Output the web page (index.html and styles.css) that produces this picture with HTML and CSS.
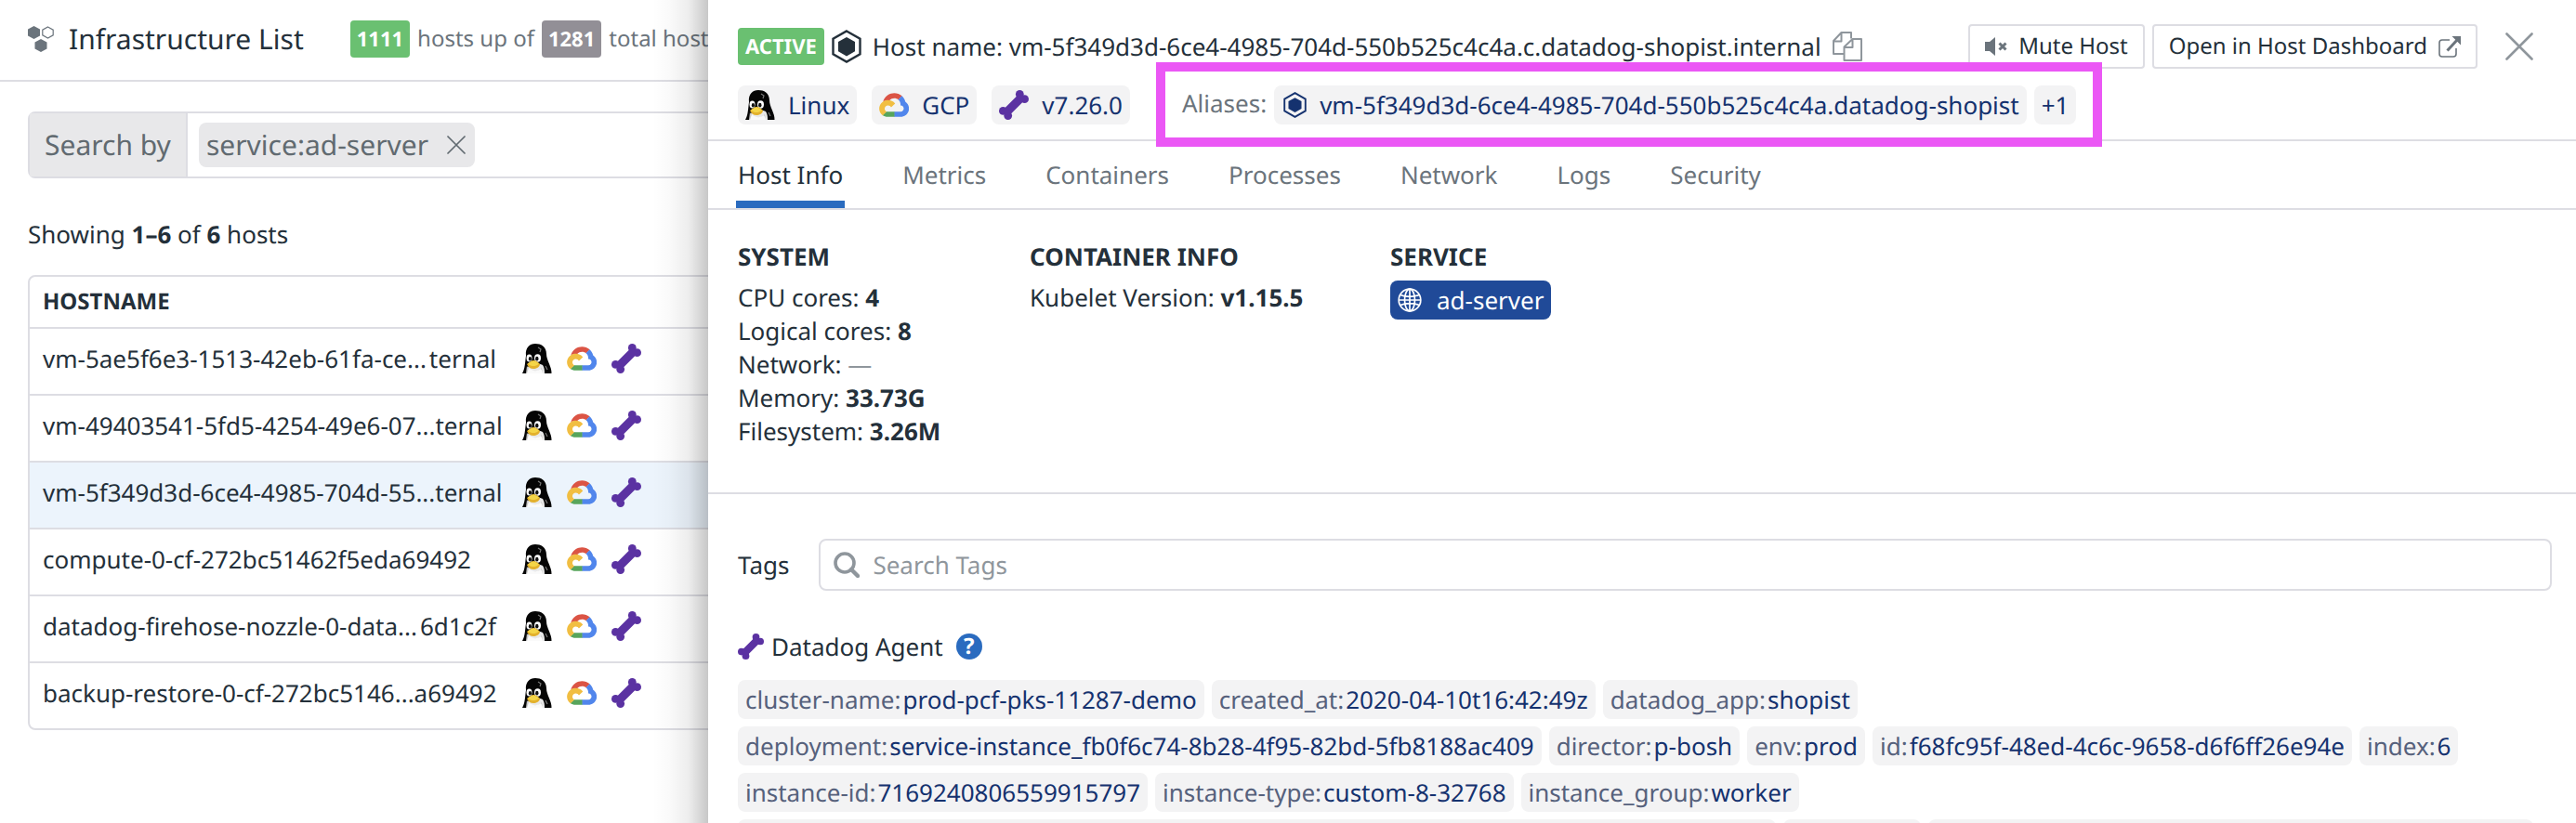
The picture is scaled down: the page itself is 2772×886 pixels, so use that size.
FILE: index.html
```html
<!DOCTYPE html>
<html lang="en">
<head>
<meta charset="utf-8">
<title>Infrastructure List</title>
<link rel="stylesheet" href="styles.css">
</head>
<body>
<svg class="sprite" aria-hidden="true">
  <symbol id="tux" viewBox="0 0 32 32">
    <path d="M4 13C3 4 8 0 14 0s12 3 12 11c0 7 6 14 5.500 21H0c3-5 3-12 4-19z" fill="#050505"/>
    <path d="M7 24c2-3 10-3 15-1 2 3 2 6 2 9H5c0-3 0-6 2-8z" fill="#e9e9e9"/>
    <path d="M5 24c3 6 10 8 16 2l1 6H4z" fill="#c9c9c9"/>
    <path d="M7 26l-2 6h17c0-2-1-3-2-5-4 3-9 3-13-1z" fill="#fafafa"/>
    <ellipse cx="7.500" cy="15.500" rx="3" ry="4" fill="#fff"/>
    <ellipse cx="16.500" cy="15.500" rx="3.500" ry="4.200" fill="#fff"/>
    <ellipse cx="8.400" cy="16.200" rx="1.600" ry="2.300" fill="#111"/>
    <ellipse cx="15.800" cy="16.200" rx="1.700" ry="2.400" fill="#111"/>
    <path d="M5 22c2-1 4-4 7-4 3 0 5 2 7 4 0 3-4 5-7 5s-6-2-7-5z" fill="#e3b12c"/>
    <path d="M6 21.500c2-1 4-3 6-3s4 2 6 3c-2 2-4 2.500-6 2.500s-4-.5-6-2.500z" fill="#f4d548"/>
    <path d="M17 4l3 2-1 3M25 24l2 4" fill="none" stroke="#777" stroke-width="1.200"/>
  </symbol>
  <symbol id="gcp" viewBox="5 14 117 94">
    <path fill="#db5445" d="M80.600 40.300h.4l-.2-.2 14-14v-.3c-11.800-10.400-28.100-14-43.200-9.500C36.500 20.800 24.900 32.800 20.700 48c.2-.1.5-.2.8-.2 5.200-3.400 11.400-5.400 17.900-5.400 2.200 0 4.300.2 6.400.6.1-.1.2-.1.3-.1 9-9.900 24.200-11.100 34.600-2.600h-.1z"/>
    <path fill="#5186ec" d="M108.100 47.800c-2.300-8.500-7.100-16.200-13.800-22.100L80 39.900c6 4.900 9.500 12.300 9.300 20v2.500c16.900 0 16.900 25.200 0 25.200H63.900v20.200h25.400c14.600.1 27.500-9.300 31.800-23.100 4.300-13.800-1-28.800-13-36.900z"/>
    <path fill="#58a55c" d="M39 107.900h26.300V87.700H39c-1.900 0-3.700-.4-5.400-1.100l-15.200 14.600v.2c6 4.300 13.200 6.600 20.700 6.500z"/>
    <path fill="#f1be42" d="M40.200 41.900c-14.900.1-28.100 9.300-32.900 22.800-4.800 13.600 0 28.500 11.800 37.300l15.600-14.900c-8.600-3.700-10.600-14.500-4-20.800 6.600-6.400 17.800-4.400 21.700 3.800L68 55.200C61.400 46.900 51.100 42 40.200 41.900z"/>
  </symbol>
  <symbol id="bone" viewBox="0 0 32 32">
    <g fill="#5b32a2"><circle cx="22.300" cy="4.400" r="4.400"/><circle cx="27.600" cy="9.700" r="4.400"/><circle cx="4.400" cy="22.400" r="4.400"/><circle cx="9.700" cy="27.600" r="4.400"/></g>
    <path d="M7 25L25 7" stroke="#5b32a2" stroke-width="9"/>
  </symbol>
  <symbol id="hex" viewBox="0 0 32 36">
    <path d="M16 1.500L30.500 9.800v16.400L16 34.500 1.500 26.200V9.800z" fill="none" stroke="currentColor" stroke-width="2.400"/>
    <path d="M16 8l9 5v10.200L16 28.400 7 23.200V13z" fill="currentColor"/>
  </symbol>
  <symbol id="cross" viewBox="0 0 30 30">
    <path d="M1.500 1.500l27 27M28.500 1.500l-27 27" fill="none" stroke="currentColor" stroke-width="2.600" stroke-linecap="round"/>
  </symbol>
</svg>

<main class="page">
  <header class="page-header">
    <svg class="brand-icon" viewBox="0 0 28 28" aria-hidden="true">
      <path d="M6.500 0L13 3.500v7L6.500 14 0 10.500v-7zM14 14l6.500 3.500v7L14 28l-6.500-3.500v-7z" fill="#6b747c"/>
      <path d="M21.500 1l5.700 3.100v5.800L21.500 13l-5.700-3.100V4.100z" fill="none" stroke="#6b747c" stroke-width="1.200"/>
    </svg>
    <h1 class="title">Infrastructure List</h1>
    <p class="stats"><span class="badge badge-up">1111</span><span>hosts up of</span><span class="badge badge-total">1281</span><span>total hosts</span></p>
  </header>

  <div class="page-body">
    <div class="filter">
      <label class="filter-label" for="filter">Search by</label>
      <div class="filter-field">
        <span class="filter-chip">service:ad-server<button class="icon-button" type="button" aria-label="Remove filter"><svg class="chip-cross"><use href="#cross"/></svg></button></span>
        <input class="filter-input" id="filter" type="text">
      </div>
    </div>
    <p class="showing">Showing <b>1–6</b> of <b>6</b> hosts</p>

    <div class="table-frame">
      <table class="hosts">
        <thead><tr><th scope="col">HOSTNAME</th></tr></thead>
        <tbody>
          <tr><td><div class="host"><span class="host-name"><span>vm-5ae5f6e3-1513-42eb-61fa-ce...</span><span>ternal</span></span><span class="apps"><svg class="i32"><use href="#tux"/></svg><svg class="i32"><use href="#gcp"/></svg><svg class="i32"><use href="#bone"/></svg></span></div></td></tr>
          <tr><td><div class="host"><span class="host-name"><span>vm-49403541-5fd5-4254-49e6-07...</span><span>ternal</span></span><span class="apps"><svg class="i32"><use href="#tux"/></svg><svg class="i32"><use href="#gcp"/></svg><svg class="i32"><use href="#bone"/></svg></span></div></td></tr>
          <tr class="selected"><td><div class="host"><span class="host-name"><span>vm-5f349d3d-6ce4-4985-704d-55...</span><span>ternal</span></span><span class="apps"><svg class="i32"><use href="#tux"/></svg><svg class="i32"><use href="#gcp"/></svg><svg class="i32"><use href="#bone"/></svg></span></div></td></tr>
          <tr><td><div class="host"><span class="host-name"><span>compute-0-cf-272bc51462f5eda69492</span></span><span class="apps"><svg class="i32"><use href="#tux"/></svg><svg class="i32"><use href="#gcp"/></svg><svg class="i32"><use href="#bone"/></svg></span></div></td></tr>
          <tr><td><div class="host"><span class="host-name"><span>datadog-firehose-nozzle-0-data...</span><span>6d1c2f</span></span><span class="apps"><svg class="i32"><use href="#tux"/></svg><svg class="i32"><use href="#gcp"/></svg><svg class="i32"><use href="#bone"/></svg></span></div></td></tr>
          <tr><td><div class="host"><span class="host-name"><span>backup-restore-0-cf-272bc5146...</span><span>a69492</span></span><span class="apps"><svg class="i32"><use href="#tux"/></svg><svg class="i32"><use href="#gcp"/></svg><svg class="i32"><use href="#bone"/></svg></span></div></td></tr>
        </tbody>
      </table>
    </div>
  </div>
</main>

<aside class="drawer">
  <header class="drawer-header">
    <div class="host-row">
      <span class="badge badge-up badge-active">ACTIVE</span>
      <svg class="host-hex"><use href="#hex"/></svg>
      <h2 class="host-title">Host name: vm-5f349d3d-6ce4-4985-704d-550b525c4c4a.c.datadog-shopist.internal</h2>
      <button class="icon-button" type="button" aria-label="Copy host name">
        <svg class="i32" viewBox="0 0 32 32" fill="none" stroke="#8f969c" stroke-width="2" stroke-linejoin="round"><path d="M12 24H1V10l8.500-9H20v6.500M1 10.500h8.500V1"/><path d="M12.500 31V16.500L21.500 8H31v23zM12.500 17h9V8"/></svg>
      </button>
      <div class="actions">
        <button class="button" type="button">
          <svg class="i24" viewBox="0 0 24 24" aria-hidden="true"><path d="M0 7h5l6-5v20l-6-5H0z" fill="#6b747c"/><path d="M15.500 8.500l7 7M22.500 8.500l-7 7" stroke="#6b747c" stroke-width="3"/></svg>
          Mute Host
        </button>
        <button class="button" type="button">
          Open in Host Dashboard
          <svg class="i24" viewBox="0 0 24 24" aria-hidden="true" fill="none" stroke="#6b747c"><path d="M12 5H4a3 3 0 0 0-3 3v12a3 3 0 0 0 3 3h12a3 3 0 0 0 3-3v-6" stroke-width="1.600"/><path d="M9.500 16.500L21 4" stroke-width="3"/><path d="M14.500 1H24v9.500z" fill="#6b747c" stroke="none"/></svg>
        </button>
        <button class="icon-button close" type="button" aria-label="Close"><svg class="close-cross"><use href="#cross"/></svg></button>
      </div>
    </div>
    <div class="meta-row">
      <span class="chip app-chip"><svg class="i32"><use href="#tux"/></svg>Linux</span>
      <span class="chip app-chip"><svg class="i32"><use href="#gcp"/></svg>GCP</span>
      <span class="chip app-chip"><svg class="i32"><use href="#bone"/></svg>v7.26.0</span>
      <div class="aliases">
        <span class="aliases-label">Aliases:</span>
        <span class="chip alias-chip"><svg class="alias-hex"><use href="#hex"/></svg>vm-5f349d3d-6ce4-4985-704d-550b525c4c4a.datadog-shopist</span>
        <button class="chip more" type="button">+1</button>
      </div>
    </div>
  </header>

  <nav class="tabs">
    <a class="tab tab-current" href="#info">Host Info</a>
    <a class="tab" href="#metrics">Metrics</a>
    <a class="tab" href="#containers">Containers</a>
    <a class="tab" href="#processes">Processes</a>
    <a class="tab" href="#network">Network</a>
    <a class="tab" href="#logs">Logs</a>
    <a class="tab" href="#security">Security</a>
  </nav>

  <section class="info">
    <div>
      <h3 class="info-title">SYSTEM</h3>
      <ul class="facts">
        <li>CPU cores: <b>4</b></li>
        <li>Logical cores: <b>8</b></li>
        <li>Network: <span class="none">—</span></li>
        <li>Memory: <b>33.73G</b></li>
        <li>Filesystem: <b>3.26M</b></li>
      </ul>
    </div>
    <div>
      <h3 class="info-title">CONTAINER INFO</h3>
      <ul class="facts"><li>Kubelet Version: <b>v1.15.5</b></li></ul>
    </div>
    <div>
      <h3 class="info-title">SERVICE</h3>
      <a class="service" href="#ad-server"><svg class="i26" viewBox="0 0 26 26" fill="none" stroke="#fff" stroke-width="1.700" aria-hidden="true"><circle cx="13" cy="13" r="11.800"/><ellipse cx="13" cy="13" rx="5.500" ry="11.800"/><path d="M13 1v24M1.500 13h23M3 7.500c5 2.500 15 2.500 20 0M3 18.500c5-2.500 15-2.500 20 0"/></svg>ad-server</a>
    </div>
  </section>

  <section class="tags">
    <div class="tag-search">
      <label for="tag-search">Tags</label>
      <div class="tag-field">
        <svg class="i28" viewBox="0 0 28 28" fill="none" stroke="#8f969c" aria-hidden="true"><circle cx="12" cy="12" r="10" stroke-width="3.600"/><path d="M19 19l7 7" stroke-width="4.400" stroke-linecap="round"/></svg>
        <input class="tag-input" id="tag-search" type="text" placeholder="Search Tags">
      </div>
    </div>
    <h3 class="source"><svg class="i28"><use href="#bone"/></svg>Datadog Agent<span class="help">?</span></h3>
    <div class="tag-list">
      <span class="chip"><span class="key">cluster-name:</span>prod-pcf-pks-11287-demo</span>
      <span class="chip"><span class="key">created_at:</span>2020-04-10t16:42:49z</span>
      <span class="chip"><span class="key">datadog_app:</span>shopist</span>
      <span class="chip"><span class="key">deployment:</span>service-instance_fb0f6c74-8b28-4f95-82bd-5fb8188ac409</span>
      <span class="chip"><span class="key">director:</span>p-bosh</span>
      <span class="chip"><span class="key">env:</span>prod</span>
      <span class="chip"><span class="key">id:</span>f68fc95f-48ed-4c6c-9658-d6f6ff26e94e</span>
      <span class="chip"><span class="key">index:</span>6</span>
      <span class="chip"><span class="key">instance-id:</span>7169240806559915797</span>
      <span class="chip"><span class="key">instance-type:</span>custom-8-32768</span>
      <span class="chip"><span class="key">instance_group:</span>worker</span>
      <span class="chip chip-long"></span>
      <span class="chip chip-short"></span>
      <span class="chip chip-medium"></span>
    </div>
  </section>
</aside>
</body>
</html>
```

FILE: styles.css
```css
* { box-sizing: border-box; }

body {
  position: relative;
  height: 100vh;
  margin: 0;
  overflow: hidden;
  background: #fff;
  color: #24303a;
  font: 26px/36px "Noto Sans", sans-serif;
  text-rendering: geometricPrecision;
}

h1, h2, h3, p, ul { margin: 0; padding: 0; font-size: inherit; font-weight: 400; }
ul { list-style: none; }
svg { display: block; flex: none; }
button, input { font: inherit; color: inherit; text-rendering: inherit; }
a { color: inherit; text-decoration: none; }

.sprite { position: absolute; width: 0; height: 0; }
.i24 { width: 24px; height: 24px; }
.i26 { width: 26px; height: 26px; }
.i28 { width: 28px; height: 28px; }
.i32 { width: 32px; height: 32px; }

.icon-button { display: flex; padding: 0; border: 0; background: none; }

/* Host list */
.page-header {
  display: flex;
  align-items: center;
  height: 88px;
  padding: 0 30px 2px;
  border-bottom: 2px solid #dddde3;
  white-space: nowrap;
}
.brand-icon { width: 28px; height: 28px; margin-right: 16px; }
.title { font-size: 30px; }
.stats {
  display: flex;
  align-items: center;
  gap: 8px;
  margin-left: 50px;
  color: #6b747c;
  font-size: 24px;
}
.badge {
  padding: 0 7px;
  border-radius: 4px;
  color: #fff;
  font-size: 22px;
  font-weight: 700;
  line-height: 40px;
}
.badge-up { background: #6ac071; }
.badge-total { background: #928f96; }

.page-body { padding: 32px 30px; }
.filter {
  display: flex;
  height: 72px;
  border: 2px solid #dddde3;
  border-radius: 8px;
  color: #616a70;
  font-size: 30px;
}
.filter-label {
  padding: 0 16px;
  border-right: 2px solid #dddde3;
  background: #e8e8ea;
  line-height: 68px;
  white-space: nowrap;
}
.filter-field { display: flex; flex: 1; align-items: center; padding: 0 12px; }
.filter-chip {
  display: flex;
  align-items: center;
  gap: 20px;
  height: 48px;
  padding: 0 10px 0 8px;
  border-radius: 8px;
  background: #e8e8ea;
}
.chip-cross { width: 20px; height: 20px; }
.filter-input { flex: 1; border: 0; outline: 0; background: none; }
.showing { margin: 42px 0 26px; }

.table-frame { border: 2px solid #dddde3; border-radius: 8px; overflow: hidden; }
.hosts { width: 100%; border-collapse: separate; border-spacing: 0; }
.hosts th {
  height: 54px;
  padding: 0 14px;
  font-size: 24px;
  text-align: left;
}
.hosts td { padding: 14px 14px 20px; border-top: 2px solid #dddde3; }
.selected { background: #ecf4fc; }
.host { display: flex; align-items: center; height: 36px; gap: 28px; }
.host-name { display: flex; justify-content: space-between; width: 488px; white-space: nowrap; }
.apps { display: flex; gap: 16px; }

/* Host details drawer */
.drawer {
  position: absolute;
  inset: 0 0 0 762px;
  overflow: hidden;
  background: #fff;
}
body::after {
  content: "";
  position: absolute;
  top: 0;
  bottom: 0;
  left: 702px;
  width: 60px;
  background: linear-gradient(to right, rgba(0,0,0,0), rgba(0,0,0,.02) 30%, rgba(0,0,0,.07) 65%, rgba(0,0,0,.22));
}
.drawer-header {
  padding: 26px 46px 16px 32px;
  border-bottom: 2px solid #dddde3;
  white-space: nowrap;
}
.host-row { display: flex; align-items: center; height: 48px; }
.badge-active { padding: 0 8px; }
.host-hex { width: 32px; height: 36px; margin: 0 12px 0 8px; }
.host-title { margin-right: 12px; }
.actions { display: flex; align-items: center; gap: 8px; margin-left: auto; }
.button {
  display: flex;
  align-items: center;
  gap: 12px;
  height: 48px;
  padding: 0 16px;
  border: 2px solid #dddde3;
  border-radius: 4px;
  background: #fff;
  font-size: 24px;
}
.close { margin-left: 22px; color: #8f969c; }
.close-cross { width: 30px; height: 30px; }

.meta-row { display: flex; gap: 16px; margin-top: 18px; }
.chip {
  display: flex;
  align-items: center;
  height: 42px;
  padding: 0 8px;
  border: 0;
  border-radius: 8px;
  background: #f3f3f4;
  color: #15326f;
}
.app-chip { gap: 14px; }
.aliases { position: relative; display: flex; gap: 8px; margin-left: 40px; }
.aliases::after {
  content: "";
  position: absolute;
  inset: -25px -28px -24px;
  border: 10px solid #eb57f5;
}
.aliases-label { line-height: 38px; color: #6b747c; }
.alias-chip { gap: 14px; padding-left: 10px; }
.alias-hex { width: 25px; height: 28px; }

.tabs {
  display: flex;
  gap: 60px;
  padding: 0 30px;
  border-bottom: 2px solid #dddde3;
  color: #6b747c;
}
.tab { height: 72px; padding: 0 2px; line-height: 72px; }
.tab-current { border-bottom: 8px solid #2a6bbf; color: #24303a; }

.info {
  display: grid;
  grid-template-columns: 314px 388px auto;
  padding: 32px 32px 48px;
  border-bottom: 2px solid #dddde3;
}
.info-title { margin-bottom: 8px; font-weight: 700; }
.none { color: #8f969c; }
.service {
  display: inline-flex;
  align-items: center;
  gap: 16px;
  height: 42px;
  padding: 0 8px;
  border-radius: 8px;
  background: #204a98;
  color: #fff;
}

.tags { padding: 48px 26px 0 32px; }
.tag-search { display: flex; align-items: center; gap: 32px; }
.tag-field {
  display: flex;
  flex: 1;
  align-items: center;
  gap: 14px;
  height: 56px;
  padding: 0 14px;
  border: 2px solid #dddde3;
  border-radius: 8px;
}
.tag-input { flex: 1; padding: 0; border: 0; outline: 0; background: none; }
.tag-input::placeholder { color: #8f969c; opacity: 1; }
.source { display: flex; align-items: center; gap: 8px; margin: 42px 0 18px; }
.help {
  width: 28px;
  height: 28px;
  margin-left: 6px;
  border-radius: 50%;
  background: #2a6bbf;
  color: #fff;
  font-size: 24px;
  font-weight: 700;
  line-height: 28px;
  text-align: center;
}
.tag-list { display: flex; flex-wrap: wrap; gap: 8px; white-space: nowrap; }
.key { margin-right: 2px; color: #56617c; }
.chip-long { width: 1117px; }
.chip-short { width: 148px; }
.chip-medium { width: 651px; }
```
